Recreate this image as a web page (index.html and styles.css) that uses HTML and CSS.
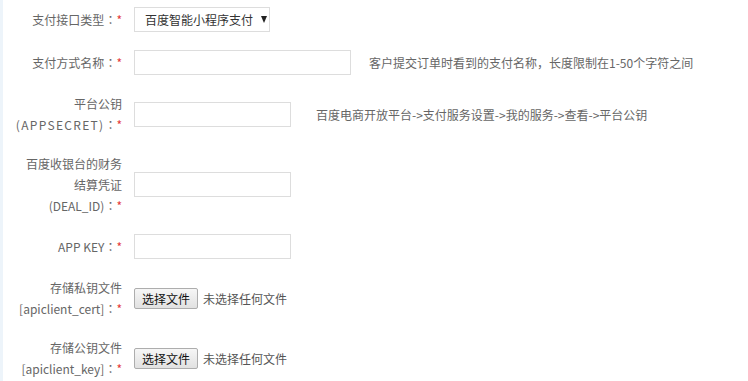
FILE: index.html
```html
<!DOCTYPE html>
<html lang="zh-CN">
<head>
    <meta charset="UTF-8">
    <meta name="viewport" content="width=device-width, initial-scale=1.0">
    <title>支付方式设置</title>
    <link rel="stylesheet" href="styles.css">
</head>
<body>
    <div class="page">
        <div class="form">
            <div class="form-row">
                <label class="form-label">支付接口类型<span class="colon">：</span><em>*</em></label>
                <div class="form-field">
                    <div class="select-box">百度智能小程序支付<span class="arrow"></span></div>
                </div>
            </div>
            <div class="form-row">
                <label class="form-label">支付方式名称<span class="colon">：</span><em>*</em></label>
                <div class="form-field">
                    <input type="text" class="text-input wide">
                    <span class="help">客户提交订单时看到的支付名称，长度限制在1-50个字符之间</span>
                </div>
            </div>
            <div class="form-row">
                <label class="form-label">平台公钥<br><span class="caps">(APPSECRET)</span><span class="colon">：</span><em>*</em></label>
                <div class="form-field">
                    <input type="text" class="text-input">
                    <span class="help help-far">百度电商开放平台-&gt;支付服务设置-&gt;我的服务-&gt;查看-&gt;平台公钥</span>
                </div>
            </div>
            <div class="form-row">
                <label class="form-label">百度收银台的财务<br>结算凭证<br>(DEAL_ID)<span class="colon">：</span><em>*</em></label>
                <div class="form-field">
                    <input type="text" class="text-input">
                </div>
            </div>
            <div class="form-row">
                <label class="form-label">APP KEY<span class="colon">：</span><em>*</em></label>
                <div class="form-field">
                    <input type="text" class="text-input">
                </div>
            </div>
            <div class="form-row">
                <label class="form-label">存储私钥文件<br>[apiclient_cert]<span class="colon">：</span><em>*</em></label>
                <div class="form-field">
                    <button type="button" class="file-btn">选择文件</button>
                    <span class="file-name">未选择任何文件</span>
                </div>
            </div>
            <div class="form-row">
                <label class="form-label">存储公钥文件<br>[apiclient_key]<span class="colon">：</span><em>*</em></label>
                <div class="form-field">
                    <button type="button" class="file-btn">选择文件</button>
                    <span class="file-name">未选择任何文件</span>
                </div>
            </div>
        </div>
    </div>
</body>
</html>
```

FILE: styles.css
```css
body {
    margin: 0;
    padding: 0;
    background-color: #fff;
    font-family: "Noto Sans CJK SC", "Noto Sans", sans-serif;
    font-size: 12px;
    color: #666;
}
.page {
    border-left: 3px solid #edf4fa;
    min-height: 100vh;
    box-sizing: border-box;
}
.form {
    padding-top: 7px;
    display: flex;
    flex-direction: column;
    gap: 18px;
}
.form-row {
    display: flex;
    align-items: center;
}
.form-label {
    width: 119px;
    text-align: right;
    line-height: 21px;
    color: #666;
    flex-shrink: 0;
}
.form-label em {
    font-style: normal;
    color: #e4393c;
}
.form-label .caps {
    letter-spacing: 1.3px;
}
/* centered full-width colon, like the original UI font */
.colon {
    font-family: "Noto Sans CJK TC", sans-serif;
    font-feature-settings: "locl" 0;
}
.form-field {
    margin-left: 12px;
    display: flex;
    align-items: center;
}
.select-box {
    width: 136px;
    height: 25px;
    box-sizing: border-box;
    border: 1px solid #ddd;
    padding: 0 0 0 10px;
    display: flex;
    align-items: center;
    color: #333;
    font-size: 12px;
}
.select-box .arrow {
    width: 0;
    height: 0;
    margin-left: 8px;
    border-left: 3.5px solid transparent;
    border-right: 3.5px solid transparent;
    border-top: 7px solid #222;
}
.text-input {
    width: 157px;
    height: 25px;
    box-sizing: border-box;
    border: 1px solid #ddd;
    margin: 0;
    padding: 0 6px;
    font-size: 12px;
    outline: none;
}
.text-input.wide {
    width: 217px;
}
.help {
    margin-left: 18px;
    color: #666;
}
.help-far {
    margin-left: 25px;
}
.file-btn {
    width: 64px;
    height: 21px;
    box-sizing: border-box;
    padding: 0;
    margin: 0;
    border: 1px solid #adadad;
    border-radius: 2px;
    background: linear-gradient(#f6f6f6, #e1e1e1);
    font-family: "Noto Sans CJK SC", sans-serif;
    font-size: 12px;
    color: #111;
    line-height: 19px;
}
.file-name {
    margin-left: 5px;
    color: #555;
}
```
